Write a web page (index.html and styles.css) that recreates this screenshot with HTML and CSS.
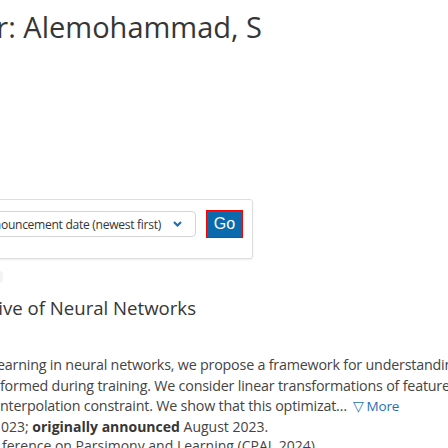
FILE: index.html
```html
<!DOCTYPE html>
<html>
<head>
<meta charset="utf-8">
<link rel="stylesheet" href="styles.css">
</head>
<body>
<div class="page">
  <h1 class="title"><span>Showing 1&ndash;7 of 7 results for author: Alemohammad, S</span></h1>

  <div class="box">
    <div class="select">
      <span class="select-text">Sort results by announcement date (newest first)</span>
      <svg class="chev" width="9" height="6" viewBox="0 0 9 6"><path d="M1 1 L4.5 4.5 L8 1" fill="none" stroke="#1f6fb2" stroke-width="2.2"/></svg>
    </div>
    <div class="go">Go</div>
  </div>

  <div class="tag"></div>

  <p class="paper-title"><span>An Adaptive Tangent Feature Perspective of Neural Networks</span></p>

  <p class="abstract">
    <span class="line l1">earning in neural networks, we propose a framework for understanding linear models</span>
    <span class="line l2">formed during training. We consider linear transformations of features, resulting in</span>
    <span class="line l3">nterpolation constraint. We show that this optimizat&hellip; <a class="more">&#9661; More</a></span>
  </p>
  <p class="meta l4">023; <b>originally announced</b> August 2023.</p>
  <p class="meta l5">ference on Parsimony and Learning (CPAL 2024)</p>
</div>
</body>
</html>
```
FILE: styles.css
```css
html, body {
  margin: 0;
  padding: 0;
  background: #fff;
  overflow: hidden;
}
body {
  font-family: "Open Sans", "Noto Sans", sans-serif;
  color: #444444;
  width: 448px;
  height: 448px;
}
.page {
  width: 448px;
}
.title {
  margin: 9px 0 0 0;
  width: 262px;
  display: flex;
  justify-content: flex-end;
  font-size: 29px;
  font-weight: 400;
  line-height: 36px;
  color: #363636;
  white-space: nowrap;
}
.box {
  margin: 154px 0 0 -300px;
  width: 553px;
  box-sizing: border-box;
  border: 1px solid #dedede;
  border-radius: 3px;
  box-shadow: 0 1px 2px rgba(10,10,10,0.08);
  padding: 10px 9px 20px 0;
  display: flex;
  justify-content: flex-end;
  align-items: center;
  gap: 10px;
}
.select {
  width: 420px;
  height: 26px;
  box-sizing: border-box;
  border: 1px solid #d5d5d5;
  border-radius: 4px;
  display: flex;
  justify-content: flex-end;
  align-items: center;
  padding-right: 13px;
  gap: 12px;
  overflow: hidden;
}
.select-text {
  font-size: 12.1px;
  letter-spacing: -0.3px;
  color: #363636;
  white-space: nowrap;
}
.chev { flex: none; }
.go {
  width: 37px;
  height: 28px;
  box-sizing: border-box;
  background: #0b6aad;
  border: 1px solid #ff0000;
  color: #fff;
  font-family: "Liberation Sans", Arial, sans-serif;
  font-size: 16px;
  display: flex;
  align-items: center;
  justify-content: center;
}
.tag {
  margin: 12px 0 0 -40px;
  width: 43px;
  height: 12px;
  border-radius: 4px;
  background: #f3f3f3;
}
.paper-title {
  margin: 13px 0 0 0;
  width: 196px;
  display: flex;
  justify-content: flex-end;
  font-size: 18.6px;
  line-height: 24px;
  color: #363636;
  white-space: nowrap;
}
.abstract {
  margin: 35px 0 0 0;
  font-size: 14.3px;
  letter-spacing: -0.2px;
  line-height: 20.5px;
  white-space: nowrap;
}
.line { display: block; }
.l1 { margin-left: -3px; }
.more {
  color: #1f6fb8;
  font-size: 13.5px;
  margin-left: 2px;
}
.meta {
  margin: 0;
  font-size: 14px;
  line-height: 19.5px;
  white-space: nowrap;
}
.meta b { color: #363636; font-weight: 700; }
.l4 { margin-left: 1px; }
.l5 { margin-left: 2px; }
```
